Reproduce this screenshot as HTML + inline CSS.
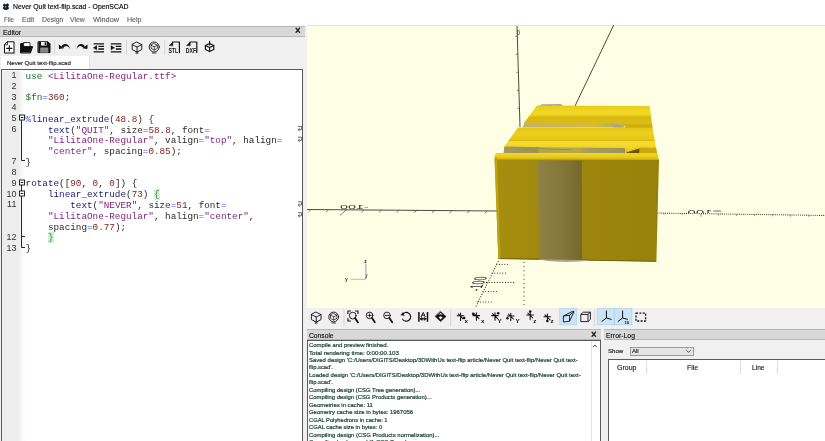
<!DOCTYPE html>
<html><head><meta charset="utf-8"><title>Never Quit text-flip.scad - OpenSCAD</title>
<style>
*{margin:0;padding:0;box-sizing:border-box}
html,body{width:825px;height:441px;overflow:hidden;background:#fff}
body{position:relative;will-change:transform;font-family:"Liberation Sans",sans-serif;color:#111}
.abs{position:absolute}
.t{position:absolute;white-space:pre;line-height:1;transform-origin:0 50%;-webkit-text-stroke:0.15px currentColor}
#title{left:12.5px;top:1.5px;font-size:8.2px;color:#111}
.menu{top:16px;font-size:7.8px;color:#666}
#edhead{left:0;top:25.8px;width:304.5px;height:10.8px;background:#d8d8d8;border-top:1px solid #b6b6b6;border-bottom:1px solid #b6b6b6}
#leftbg{left:0;top:25.5px;width:307px;height:416px;background:#f0f0f0}
#tab{left:0.5px;top:56.3px;width:89px;height:14px;background:#fff;border-right:1px solid #e2e2e2}
#editor{left:1px;top:69.2px;width:302px;height:380px;background:#fff;border:1px solid #5a5a5a}
#margin{left:2px;top:70.5px;width:23.5px;height:371px;background:linear-gradient(90deg,#ededed 0,#ededed 68%,#fafafa 86%,#fff 100%)}
.ln{position:absolute;left:0;width:16.4px;margin-top:-1.6px;text-align:right;font-size:9px;color:#333;line-height:10.78px;height:10.78px;font-family:"Liberation Sans",sans-serif}
.cl{position:absolute;left:25.6px;white-space:pre;font-family:"Liberation Mono",monospace;font-size:9.3px;line-height:10.78px;height:10.78px;color:#2a2a2a}
.b{background:#d4efd4;color:#2f8a3a}.k{color:#1f6b1f}.s{color:#7a1f7a}.n{color:#7d1a1a}.o{color:#3a55e8}.f{color:#1a1a6e}
#view{left:307px;top:25px;width:518px;height:282.5px;background:#ffffe5;border-top:1px solid #e4e4e0}
#vtool{left:304.5px;top:307.5px;width:521px;height:22px;background:#f0f0f0}
#botbg{left:304.5px;top:329px;width:521px;height:112px;background:#f0f0f0}
.phead{height:11px;background:#d8d8d8;border-top:1px solid #b6b6b6;border-bottom:1px solid #b6b6b6}
#console{left:306.6px;top:340px;width:294.4px;height:110px;background:#fff;border:1px solid #5a5a5a}
.ct{position:absolute;left:309px;white-space:pre;font-size:6.2px;line-height:7.47px;height:7.47px;color:#173f2e;-webkit-text-stroke:0.22px #173f2e;transform-origin:0 50%}
#errtab{left:608px;top:358.5px;width:230px;height:100px;background:#fff;border:1px solid #5a5a5a}
</style></head><body>
<!-- title + menu -->
<svg class="abs" style="left:1.6px;top:2.8px" width="7.8" height="7.2" viewBox="0 0 10 10"><path d="M0.6 3 L2.6 0.6 L4.8 2 L7.4 0.4 L9.6 2.8 L8 5 L9.6 7.4 L6.4 9.6 L2.8 9.4 L0.4 7.2 L2 5 Z" fill="#141c34"/><circle cx="4.6" cy="5.2" r="1.2" fill="#8fa0c8"/></svg>

<div class="abs" id="leftbg"></div>
<div class="abs" id="edhead"></div>

<!-- editor toolbar icons -->
<svg class="abs" id="edicons" style="left:0;top:37px" width="307" height="20" viewBox="0 0 307 20">
<g transform="translate(0 -37)" fill="none" stroke="#111" stroke-width="1" stroke-linejoin="round" stroke-linecap="round">
<!-- new -->
<path d="M7.5 41.8 H14 V53 H4.5 V44.8 Z" fill="#fff"/>
<path d="M7.5 41.8 V44.8 H4.5" stroke-width="0.8"/>
<path d="M5.5 53.6 H14.6 V43" stroke="#777" stroke-width="0.8"/>
<path d="M9.3 45.8 V51 M6.7 48.4 H11.9" stroke-width="1.1"/>
<!-- open -->
<path d="M20.6 52.4 V43.6 H23 L24 42.6 H27 V44" fill="#111"/>
<path d="M23.6 46 V42.6 H30 V46" fill="#fff" stroke-width="0.8"/>
<path d="M20.6 52.6 L22.6 46.6 H32.6 L30.6 52.6 Z" fill="#111"/>
<!-- save -->
<path d="M38.4 41.8 H48 L50 43.8 V52.6 H38.4 Z" fill="#111"/>
<rect x="41" y="42" width="5.6" height="3.6" fill="#f0f0f0" stroke="none"/>
<rect x="44.6" y="42.4" width="1.4" height="2.8" fill="#111" stroke="none"/>
<rect x="40.2" y="47.6" width="8" height="5" fill="#999" stroke="none"/>
<path d="M40.4 49 H48 M40.4 50.4 H48 M40.4 51.8 H48" stroke="#666" stroke-width="0.5"/>
<!-- seps -->
<path d="M54.6 40 V54 M126.5 40 V54 M164.7 40 V54" stroke="#cfcfcf" stroke-width="0.8"/>
<!-- undo -->
<g id="undo" stroke="none" fill="#111">
<path d="M61.6 46.2 C63.4 43.4 68.4 42.6 70 48.9 C67.6 45.2 65 45.4 63.4 48 Z"/>
<path d="M58.8 44.6 L59 49.1 L64 48.3 Z"/>
</g>
<!-- redo -->
<g stroke="none" fill="#111" transform="translate(146.4 0) scale(-1 1)">
<path d="M61.6 46.2 C63.4 43.4 68.4 42.6 70 48.9 C67.6 45.2 65 45.4 63.4 48 Z"/>
<path d="M58.8 44.6 L59 49.1 L64 48.3 Z"/>
</g>
<!-- unindent -->
<path d="M93.6 43.8 H104 M98.4 46.4 H104 M98.4 49 H104 M93.6 51.8 H104" stroke-width="1.3" stroke-linecap="butt"/>
<path d="M93.4 47.7 L96.8 45.6 V49.8 Z" fill="#111" stroke-width="0.4"/>
<!-- indent -->
<path d="M110.8 43.8 H121.4 M115.8 46.4 H121.4 M115.8 49 H121.4 M110.8 51.8 H121.4" stroke-width="1.3" stroke-linecap="butt"/>
<path d="M114.4 47.7 L111 45.6 V49.8 Z" fill="#111" stroke-width="0.4"/>
<!-- preview cube -->
<g stroke-width="0.9">
<path d="M137 42.2 L141.8 44.6 V49.6 L137 52 L132.2 49.6 V44.6 Z"/>
<path d="M132.2 44.6 L137 47 L141.8 44.6 M137 47 V52"/>
<path d="M135.6 51.6 l1.4 1.4 l1.4 -1.4 M135.6 53 l1.4 1 l1.4 -1" stroke-width="0.6"/>
</g>
<!-- render cube -->
<g stroke-width="0.9">
<circle cx="154.2" cy="47" r="5"/>
<path d="M154.2 43.6 L157.4 45.2 V48.4 L154.2 50 L151 48.4 V45.2 Z" stroke-width="0.7"/>
<path d="M151 45.2 L154.2 46.8 L157.4 45.2 M154.2 46.8 V50" stroke-width="0.7"/>
<path d="M152.4 53 H156" stroke-width="0.8"/>
</g>
<!-- STL -->
<path d="M172.6 42 H179.4 V52.6" stroke-width="1.2"/><path d="M169.4 45.4 L172.8 42 V45.4 Z" fill="#111" stroke-width="0.6"/>
<!-- DXF -->
<path d="M190 42 H196.8 V52.6" stroke-width="1.2"/><path d="M186.8 45.4 L190.2 42 V45.4 Z" fill="#111" stroke-width="0.6"/>
<!-- 3d print -->
<g stroke-width="1.15">
<path d="M209.6 43.6 L213.8 45.6 V49.6 L209.6 51.6 L205.4 49.6 V45.6 Z"/>
<path d="M205.4 45.6 L209.6 47.6 L213.8 45.6 M209.6 47.6 V51.6"/>
<path d="M209.6 41.4 V45" stroke-width="1.2"/>
</g>
</g>
<text x="168.4" y="15.8" font-family="Liberation Sans,sans-serif" font-size="7.6" font-weight="bold" fill="#111" textLength="9.8" lengthAdjust="spacingAndGlyphs">STL</text>
<text x="185.8" y="15.8" font-family="Liberation Sans,sans-serif" font-size="7.6" font-weight="bold" fill="#111" textLength="10.2" lengthAdjust="spacingAndGlyphs">DXF</text>

</svg>

<div class="abs" id="tab"></div>
<div class="abs" id="editor"></div>
<div class="abs" id="margin"></div>
<div class="abs" id="code" style="left:0;top:71.7px;width:303px;height:370px;overflow:hidden">
<div class="ln" style="top:0.00px">1</div>
<div class="cl" style="top:0.00px"><span class="k">use</span> <span class="s">&lt;LilitaOne-Regular.ttf&gt;</span></div>
<div class="ln" style="top:10.78px">2</div>
<div class="ln" style="top:21.56px">3</div>
<div class="cl" style="top:21.56px"><span class="k">$fn</span><span class="o">=</span><span class="n">360</span>;</div>
<div class="ln" style="top:32.34px">4</div>
<div class="ln" style="top:43.12px">5</div>
<div class="cl" style="top:43.12px"><span class="o">%</span><span class="f">linear_extrude</span>(<span class="n">48.8</span>) {</div>
<div class="ln" style="top:53.90px">6</div>
<div class="cl" style="top:53.90px">    <span class="f">text</span>(<span class="s">&quot;QUIT&quot;</span>, size<span class="o">=</span><span class="n">58.8</span>, font<span class="o">=</span></div>
<div class="cl" style="top:64.68px">    <span class="s">&quot;LilitaOne-Regular&quot;</span>, valign<span class="o">=</span><span class="s">&quot;top&quot;</span>, halign<span class="o">=</span></div>
<div class="cl" style="top:75.46px">    <span class="s">&quot;center&quot;</span>, spacing<span class="o">=</span><span class="n">0.85</span>);</div>
<div class="ln" style="top:86.24px">7</div>
<div class="cl" style="top:86.24px">}</div>
<div class="ln" style="top:97.02px">8</div>
<div class="ln" style="top:107.80px">9</div>
<div class="cl" style="top:107.80px"><span class="f">rotate</span>([<span class="n">90</span>, <span class="n">0</span>, <span class="n">0</span>]) {</div>
<div class="ln" style="top:118.58px">10</div>
<div class="cl" style="top:118.58px">    <span class="f">linear_extrude</span>(<span class="n">73</span>) <span class="b">{</span></div>
<div class="ln" style="top:129.36px">11</div>
<div class="cl" style="top:129.36px">        <span class="f">text</span>(<span class="s">&quot;NEVER&quot;</span>, size<span class="o">=</span><span class="n">51</span>, font<span class="o">=</span></div>
<div class="cl" style="top:140.14px">    <span class="s">&quot;LilitaOne-Regular&quot;</span>, halign<span class="o">=</span><span class="s">&quot;center&quot;</span>,</div>
<div class="cl" style="top:150.92px">    spacing<span class="o">=</span><span class="n">0.77</span>);</div>
<div class="ln" style="top:161.70px">12</div>
<div class="cl" style="top:161.70px">    <span class="b">}</span></div>
<div class="ln" style="top:172.48px">13</div>
<div class="cl" style="top:172.48px">}</div>
</div>
<svg class="abs" style="left:0;top:70px" width="304" height="371" viewBox="0 70 304 371">
<g fill="none" stroke="#111" stroke-width="0.9">
<rect x="19.5" y="115.0" width="5" height="5" fill="#fff"/><path d="M20.7 117.5 H23.3"/>
<rect x="19.5" y="180.0" width="5" height="5" fill="#fff"/><path d="M20.7 182.5 H23.3"/>
<rect x="19.5" y="191.0" width="5" height="5" fill="#fff"/><path d="M20.7 193.5 H23.3"/>
<path d="M21.5 120.0 V160.5 H25"/>
<path d="M21.5 185.0 V191.0 M21.5 196.0 V247.5 H25 M21.5 236.5 H25"/>
</g>
<g fill="none" stroke="#333" stroke-width="0.7">
<path d="M298 126.39 H301.6 V129.59 H298.2 M299.8 127.99 L298.2 129.59 L299.8 131.19"/>
<path d="M298 137.17 H301.6 V140.37 H298.2 M299.8 138.77 L298.2 140.37 L299.8 141.97"/>
<path d="M298 201.85 H301.6 V205.05 H298.2 M299.8 203.45 L298.2 205.05 L299.8 206.65"/>
<path d="M298 212.63 H301.6 V215.83 H298.2 M299.8 214.23 L298.2 215.83 L299.8 217.43"/>
</g>
</svg>

<!-- viewport -->
<div class="abs" id="view"></div>
<svg class="abs" id="scene" style="left:307px;top:25px" width="518" height="283" viewBox="307 25 518 283">
<defs>
<linearGradient id="gband" x1="0" x2="1" y1="0" y2="0"><stop offset="0" stop-color="#8f8244"/><stop offset="0.55" stop-color="#85773a"/><stop offset="1" stop-color="#76682a"/></linearGradient>
<linearGradient id="gtop1" x1="0" x2="0" y1="0" y2="1"><stop offset="0" stop-color="#e9cb16"/><stop offset="0.3" stop-color="#f2d824"/><stop offset="0.47" stop-color="#eed21e"/><stop offset="0.52" stop-color="#d8b912"/><stop offset="0.8" stop-color="#dcbd14"/><stop offset="1" stop-color="#d0b00c"/></linearGradient>
<linearGradient id="gtop2" x1="0" x2="0" y1="0" y2="1"><stop offset="0" stop-color="#e4c614"/><stop offset="0.25" stop-color="#ecd01c"/><stop offset="0.47" stop-color="#e4c616"/><stop offset="0.5" stop-color="#d6b810"/><stop offset="0.54" stop-color="#f5dd30"/><stop offset="0.78" stop-color="#f0d524"/><stop offset="1" stop-color="#d8b910"/></linearGradient>
<linearGradient id="gtop3" x1="0" x2="0" y1="0" y2="1"><stop offset="0" stop-color="#f2d722"/><stop offset="0.5" stop-color="#eacd18"/><stop offset="1" stop-color="#c4a610"/></linearGradient>
<linearGradient id="gfront" x1="0" x2="1" y1="0" y2="0"><stop offset="0" stop-color="#a68e10"/><stop offset="0.3" stop-color="#a0880d"/><stop offset="1" stop-color="#98810b"/></linearGradient>
<clipPath id="cliplab"><rect x="-2" y="-8" width="24" height="6.2"/></clipPath>
<linearGradient id="ggap1" x1="0" x2="1" y1="0" y2="0"><stop offset="0" stop-color="#c2b272"/><stop offset="0.35" stop-color="#c9b65a"/><stop offset="0.7" stop-color="#d2ba40"/><stop offset="0.88" stop-color="#b9aa6a"/><stop offset="1" stop-color="#a7a58e"/></linearGradient>
<linearGradient id="ggap2" x1="0" x2="1" y1="0" y2="0"><stop offset="0" stop-color="#a39a62"/><stop offset="0.27" stop-color="#9a9058"/><stop offset="0.3" stop-color="#b4a548"/><stop offset="0.62" stop-color="#b8a84a"/><stop offset="0.68" stop-color="#a89c60"/><stop offset="1" stop-color="#9c925c"/></linearGradient>
</defs>
<!-- axes -->
<g stroke="#2a2a2a" stroke-width="0.85" fill="none">
<path d="M517 26 L520 127"/>
<path d="M613.7 25 L575 106"/>
<path d="M307 209.5 L497 211"/>
<path d="M517.3 36 l-2 0.6 M517.8 54 l-2 0.6 M518.4 72 l-2 0.6 M518.9 90 l-2 0.6 M519.5 108 l-2 0.6" stroke-width="0.6"/>
<path d="M311.0 209.53 l-2.6 2.4 M328.6 209.67 l-2.6 2.4 M346.3 209.81 l-6.5 5.8 M363.9 209.95 l-2.6 2.4 M381.5 210.09 l-2.6 2.4 M399.1 210.23 l-2.6 2.4 M416.8 210.37 l-2.6 2.4 M434.4 210.51 l-2.6 2.4 M452.0 210.65 l-2.6 2.4 M469.7 210.78 l-2.6 2.4 M487.3 210.92 l-2.6 2.4" stroke-width="0.6"/>
</g>
<g stroke="#2c2c2c" stroke-width="1.15" fill="none" stroke-linecap="round">
<path d="M657 213 L825 215.4" stroke-dasharray="0.01 2.1"/>
<path d="M498.1 261.6 L475.4 307.6" stroke-dasharray="0.01 2.6"/>
<path d="M496.7 264.3 H509 M492 273.1 H505.6 M486.5 282.4 H515 M483 291.5 H496.7 M477.7 302 H491.3" stroke-dasharray="0.01 2.7"/>
<path d="M524 262.4 L524 308" stroke-dasharray="0.01 4.2"/>
</g>
<g stroke="#555" stroke-width="0.6" fill="none">
<path d="M664 213.3 l0 1.6 M682 213.5 l0 1.6 M701 213.8 l0 3 M718.5 214 l0 1.6 M736.5 214.3 l0 1.6 M754.5 214.6 l0 1.6 M772.5 214.8 l0 1.6 M790.5 215.1 l0 1.6 M809 215.3 l0 1.6"/>
</g>
<!-- axis labels -->
<text x="0" y="0" font-family="Liberation Sans,sans-serif" font-size="8" fill="#333" transform="translate(368.8 209.2) scale(-1.8 0.62)">-100</text>
<text x="0" y="0" font-family="Liberation Sans,sans-serif" font-size="8" fill="#333" transform="translate(712.5 214.6) scale(-1.88 0.95)" clip-path="url(#cliplab)">100</text>
<path d="M713.4 211 H721.2" stroke="#444" stroke-width="0.8"/>
<text x="0" y="0" font-family="Liberation Sans,sans-serif" font-size="8" fill="#333" transform="matrix(0.44 -0.9 2.2 0 480.4 291)">-100</text>
<text x="0" y="0" font-family="Liberation Sans,sans-serif" font-size="7.4" fill="#333" transform="translate(516.8 34.6) scale(0.8 1)">0</text>
<!-- small axes indicator -->
<path d="M365.9 279 L365.9 263.4" stroke="#8c8cc6" stroke-width="0.9"/>
<path d="M365.6 279.3 L350.5 279.3" stroke="#5cdc62" stroke-width="0.8"/>
<path d="M365.8 278.6 l1.3 -4.4" stroke="#6a2a4a" stroke-width="0.8"/>
<text x="345" y="280.8" font-family="Liberation Sans,sans-serif" font-size="5" fill="#333" font-weight="bold">y</text>
<text x="364.2" y="262.6" font-family="Liberation Sans,sans-serif" font-size="5" fill="#222" font-weight="bold">z</text>
<!-- model -->
<!-- small gray blob behind back block -->
<path d="M539.5 106 L541.5 104.2 L561 104 L563 106 Z" fill="#a9a79a"/>
<!-- back block top -->
<path d="M537 105.5 L649.7 106 L652.4 127 L523.5 123.4 Z" fill="url(#gtop1)"/>
<!-- gap1 -->
<path d="M524.4 122.8 L617 123.8 L625.5 127.6 L522.6 127.6 Z" fill="url(#ggap1)"/>
<path d="M612 124.2 L618 124 L625.5 127.6 L614 127.6 Z" fill="#a7a58e"/>
<path d="M625 124.6 L652.2 124.8 L652.6 128.2 L625.5 128 Z" fill="#cfae10"/>
<!-- middle block top -->
<path d="M518 127.4 L652.5 127.8 L657.2 153.6 L503.8 147.2 Z" fill="url(#gtop2)"/>
<!-- gap2 -->
<path d="M504.3 146.4 L540 147.2 L625 148 L625 153.4 L503.5 153 Z" fill="url(#ggap2)"/>
<path d="M536 147.4 C546 149.6 560 150 572 149.2" fill="none" stroke="#8e8c78" stroke-width="0.9"/>
<path d="M624 153.2 L639.6 148.3 L639.6 153.4 Z" fill="#6a5608"/>
<path d="M639.6 147.6 L655.8 147.8 L657.2 153.6 L639.6 153.4 Z" fill="#caa90f"/>
<!-- front block top (rounded) -->
<path d="M496.2 153 L657.6 153.3 L659 160.6 L494.6 160 L494.7 155 Z" fill="url(#gtop3)"/>
<!-- front face -->
<path d="M494.6 159.4 L659 160 L656.4 261.6 L498.3 258.8 Z" fill="url(#gfront)"/>
<path d="M498.3 258.6 L656.4 261.4" stroke="#5e4c06" stroke-width="0.8" fill="none"/>
<path d="M494.6 157.5 L497 157.2 L500.6 258.6 L498.3 258.6 Z" fill="#c4a812" opacity="0.8"/>
<!-- background-modifier band -->
<path d="M537.5 160.4 L581.8 160.6 L582 260.2 L539.4 259.4 Z" fill="url(#gband)"/>
<path d="M539 259.6 C550 262.4 576 262.6 589 260.6 L589 260.2 L539 259.2 Z" fill="#a9a68f"/>

</svg>

<div class="abs" id="vtool"></div>
<div class="abs" id="botbg"></div>
<svg class="abs" id="vicons" style="left:305px;top:307px" width="360" height="22" viewBox="305 307 360 22">
<g fill="none" stroke="#111" stroke-width="0.9" stroke-linejoin="round" stroke-linecap="round">
<!-- highlights -->
<rect x="560" y="308.3" width="16.6" height="16.4" fill="#cce4f7" stroke="#9fccf0" stroke-width="0.6"/>
<rect x="597.8" y="308.3" width="17" height="16.4" fill="#cce4f7" stroke="#9fccf0" stroke-width="0.6"/>
<rect x="614.8" y="308.3" width="17" height="16.4" fill="#cce4f7" stroke="#9fccf0" stroke-width="0.6"/>
<!-- seps -->
<path d="M344 310 V326 M450.7 310 V326 M594.6 310 V326" stroke="#d0d0d0" stroke-width="0.8"/>
<!-- preview cube -->
<path d="M316.2 312.2 L321 314.6 V319.6 L316.2 322 L311.4 319.6 V314.6 Z"/>
<path d="M311.4 314.6 L316.2 317 L321 314.6 M316.2 317 V322"/>
<path d="M314.8 321.6 l1.4 1.4 l1.4 -1.4 M314.8 323 l1.4 1 l1.4 -1" stroke-width="0.6"/>
<!-- render cube -->
<circle cx="333.7" cy="317" r="4.9"/>
<path d="M333.7 313.6 L336.9 315.2 V318.4 L333.7 320 L330.5 318.4 V315.2 Z" stroke-width="0.7"/>
<path d="M330.5 315.2 L333.7 316.8 L336.9 315.2 M333.7 316.8 V320" stroke-width="0.7"/>
<path d="M331.9 323 H335.5" stroke-width="0.8"/>
<!-- view all -->
<path d="M347.9 313.4 V311 H350.4 M355.6 311 H358 V313.4 M347.9 318.6 V321 H350.4" stroke-width="1.1"/>
<circle cx="352.8" cy="315.6" r="3.4"/>
<path d="M355 318 L358 322.4" stroke-width="1.8"/>
<!-- zoom in -->
<circle cx="369.6" cy="315.4" r="3.3"/>
<path d="M372 318 L374.8 322.2" stroke-width="1.8"/>
<path d="M367.9 315.4 H371.3 M369.6 313.7 V317.1" stroke-width="0.8"/>
<!-- zoom out -->
<circle cx="387" cy="315.4" r="3.3"/>
<path d="M389.4 318 L392.2 322.2" stroke-width="1.8"/>
<path d="M385.3 315.4 H388.7" stroke-width="0.9"/>
<!-- reset view -->
<path d="M402.4 314.6 A4.4 4.4 0 1 1 402.6 319.3" stroke-width="1.1"/>
<path d="M401 314.8 L403 312.6 L404.2 315.6 Z" fill="#111" stroke-width="0.4"/>
<!-- translate reset -->
<path d="M418.9 312 V321.8 M427.5 312 V321.8" stroke-width="1.5" stroke-linecap="butt"/>
<path d="M420.4 318.8 H426" stroke-width="1.2"/>
<path d="M422 317 L420 318.8 L422 320.6 Z M424.4 317 L426.4 318.8 L424.4 320.6 Z" fill="#111" stroke-width="0.3"/>
<path d="M421.2 316.6 L423.2 312.4 L425.2 316.6 M422 315.2 H424.4" stroke-width="0.9"/>
<!-- diamond -->
<path d="M440.6 311.4 L446 316.5 L440.6 321.6 L435.2 316.5 Z" fill="#111" stroke-width="0.5"/>
<path d="M440.6 312.8 L442.8 315 L440.6 314.2 L438.4 315 Z" fill="#f0f0f0" stroke="none"/>
<path d="M438.6 317.2 L440.6 316.2 L442.6 317.2 L440.6 319.4 Z" fill="#f0f0f0" stroke="none"/>
</g>
<!-- axis view icons -->
<g fill="none" stroke="#111" stroke-width="1.05" stroke-linecap="round">
<path d="M457.2 315.8 H463.8 M460.6 313.0 V320.4 M458.2 313.8 L463.2 318.8"/><circle cx="464.2" cy="318.0" r="1.25" fill="#111" stroke="none"/>
<path d="M473.0 315.6 H479.6 M476.4 312.8 V320.2 M474.0 313.6 L479.0 318.6"/><circle cx="473.2" cy="313.8" r="1.25" fill="#111" stroke="none"/>
<path d="M491.6 315.6 H498.2 M495.0 312.8 V320.2 M492.6 313.6 L497.6 318.6"/><circle cx="498.2" cy="313.2" r="1.25" fill="#111" stroke="none"/>
<path d="M507.4 316.0 H514.0 M510.8 313.2 V320.6 M508.4 314.0 L513.4 319.0"/><circle cx="507.4" cy="318.2" r="1.25" fill="#111" stroke="none"/>
<path d="M526.8 315.0 H533.4 M530.2 312.2 V319.6 M527.8 313.0 L532.8 318.0"/><circle cx="530.2" cy="311.4" r="1.25" fill="#111" stroke="none"/>
<path d="M544.0 316.8 H550.6 M547.4 314.0 V321.4 M545.0 314.8 L550.0 319.8"/><circle cx="547.4" cy="321.0" r="1.25" fill="#111" stroke="none"/>
</g>
<g font-family="Liberation Sans,sans-serif" font-size="6.2" fill="#111" font-weight="bold">
<text x="464.6" y="323.2">x</text>
<text x="481" y="323.4">x</text>
<text x="497.6" y="323.2">Y</text>
<text x="515.6" y="323.4">Y</text>
<text x="533.2" y="323">z</text>
<text x="550.4" y="323">z</text>
</g>
<g fill="none" stroke="#111" stroke-width="0.9" stroke-linejoin="round">
<!-- perspective -->
<path d="M563.4 316 L569.6 315.2 V321.2 L563.4 322 Z"/>
<path d="M563.4 316 L572.8 311.2 L574 311.6 L569.6 315.2 M569.6 321.2 L574 311.6"/>
<!-- orthogonal -->
<path d="M580.8 314.4 H588 V321.6 H580.8 Z M580.8 314.4 L583.4 312.2 H590.4 V319.4 L588 321.6 M588 314.4 L590.4 312.2"/>
<!-- axes -->
<path d="M606.4 310.6 V318 L611.6 319.4 M606.4 318 L601.6 321.6" stroke-width="1"/>
<!-- scale markers -->
<path d="M622.6 310.6 V318 L627.8 319.4 M622.6 318 L617.8 321.6" stroke-width="1"/>
<!-- crosshair dashed -->
<path d="M636 313.2 H645.6 V321 H636 Z" stroke-width="1.3" stroke-dasharray="2 1.4"/>
</g>
<text x="624.4" y="323.6" font-family="Liberation Sans,sans-serif" font-size="4.4" fill="#111" font-weight="bold">10</text>

</svg>

<!-- console -->
<div class="abs phead" style="left:306.6px;top:329.3px;width:294.4px"></div>
<div class="abs" id="console"></div>
<div class="abs" style="left:0;top:0;width:590px;height:441px;overflow:hidden">
<div class="ct" style="top:341.06px;transform:scaleX(0.960)">Compile and preview finished.</div>
<div class="ct" style="top:348.54px;transform:scaleX(0.994)">Total rendering time: 0:00:00.103</div>
<div class="ct" style="top:356.00px;transform:scaleX(0.964)">Saved design &#x27;C:/Users/DIGITS/Desktop/3DWithUs text-flip article/Never Quit text-flip/Never Quit text-</div>
<div class="ct" style="top:363.48px;transform:scaleX(0.936)">flip.scad&#x27;.</div>
<div class="ct" style="top:370.94px;transform:scaleX(0.964)">Loaded design &#x27;C:/Users/DIGITS/Desktop/3DWithUs text-flip article/Never Quit text-flip/Never Quit text-</div>
<div class="ct" style="top:378.42px;transform:scaleX(0.936)">flip.scad&#x27;.</div>
<div class="ct" style="top:385.88px;transform:scaleX(0.952)">Compiling design (CSG Tree generation)...</div>
<div class="ct" style="top:393.36px;transform:scaleX(0.950)">Compiling design (CSG Products generation)...</div>
<div class="ct" style="top:400.82px;transform:scaleX(0.959)">Geometries in cache: 11</div>
<div class="ct" style="top:408.30px;transform:scaleX(0.957)">Geometry cache size in bytes: 1967056</div>
<div class="ct" style="top:415.76px;transform:scaleX(0.931)">CGAL Polyhedrons in cache: 1</div>
<div class="ct" style="top:423.24px;transform:scaleX(0.944)">CGAL cache size in bytes: 0</div>
<div class="ct" style="top:430.70px;transform:scaleX(0.955)">Compiling design (CSG Products normalization)...</div>
<div class="ct" style="top:438.18px;transform:scaleX(0.949)">Compiling background (1 CSG Trees)...</div>
</div>

<!-- error log -->
<div class="abs phead" style="left:603.5px;top:329.3px;width:222px"></div>
<div class="abs" style="left:630px;top:346.5px;width:63.5px;height:9.5px;background:#e4e4e4;border:1px solid #9a9a9a"></div>
<div class="abs" id="errtab"></div>
<div class="abs" style="left:591px;top:341px;width:1px;height:100px;background:#e3e3e3"></div>
<svg class="abs" style="left:586px;top:340px" width="110" height="20" viewBox="586 340 110 20"><path d="M593 347.2 L594.9 345 L596.8 347.2" fill="none" stroke="#333" stroke-width="0.9"/><path d="M686.4 350.2 L688.5 352.4 L690.6 350.2" fill="none" stroke="#333" stroke-width="0.8"/></svg>
<div class="abs" style="left:645.5px;top:360.5px;width:1px;height:13px;background:#dcdcdc"></div>
<div class="abs" style="left:739.5px;top:360.5px;width:1px;height:13px;background:#dcdcdc"></div>
<div class="abs" style="left:776.5px;top:360.5px;width:1px;height:13px;background:#dcdcdc"></div>
<div class="t" style="left:12.8px;top:2.75px;font-size:7.7px;height:7.7px;color:#000;transform:scaleX(0.895)">Never Quit text-flip.scad - OpenSCAD</div>
<div class="t" style="left:3.9px;top:16.20px;font-size:7.8px;height:7.8px;color:#666;transform:scaleX(0.804)">File</div>
<div class="t" style="left:21.9px;top:16.20px;font-size:7.8px;height:7.8px;color:#666;transform:scaleX(0.900)">Edit</div>
<div class="t" style="left:41.7px;top:16.20px;font-size:7.8px;height:7.8px;color:#666;transform:scaleX(0.877)">Design</div>
<div class="t" style="left:70.2px;top:16.20px;font-size:7.8px;height:7.8px;color:#666;transform:scaleX(0.883)">View</div>
<div class="t" style="left:93px;top:16.20px;font-size:7.8px;height:7.8px;color:#666;transform:scaleX(0.937)">Window</div>
<div class="t" style="left:126.5px;top:16.20px;font-size:7.8px;height:7.8px;color:#666;transform:scaleX(0.904)">Help</div>
<div class="t" style="left:3px;top:28.50px;font-size:7.2px;height:7.2px;color:#111;transform:scaleX(0.962)">Editor</div>
<div class="t" style="left:295.3px;top:26.30px;font-size:10px;height:10px;color:#111;font-weight:bold;transform:scaleX(0.959)">×</div>
<div class="t" style="left:7px;top:61.00px;font-size:5.8px;height:5.8px;color:#1a1a1a;transform:scaleX(1.031)">Never Quit text-flip.scad</div>
<div class="t" style="left:309.2px;top:332.00px;font-size:7.8px;height:7.8px;color:#111;transform:scaleX(0.860)">Console</div>
<div class="t" style="left:591.3px;top:330.00px;font-size:10px;height:10px;color:#111;font-weight:bold;transform:scaleX(0.959)">×</div>
<div class="t" style="left:605.9px;top:332.00px;font-size:7.8px;height:7.8px;color:#111;transform:scaleX(0.880)">Error-Log</div>
<div class="t" style="left:608px;top:348.70px;font-size:5.8px;height:5.8px;color:#222;transform:scaleX(1.048)">Show</div>
<div class="t" style="left:632px;top:348.70px;font-size:5.8px;height:5.8px;color:#222;transform:scaleX(1.039)">All</div>
<div class="t" style="left:617.3px;top:363.50px;font-size:7.2px;height:7.2px;color:#222;transform:scaleX(0.975)">Group</div>
<div class="t" style="left:686.7px;top:363.50px;font-size:7.2px;height:7.2px;color:#222;transform:scaleX(0.965)">File</div>
<div class="t" style="left:751.5px;top:363.50px;font-size:7.2px;height:7.2px;color:#222;transform:scaleX(0.918)">Line</div>
</body></html>
